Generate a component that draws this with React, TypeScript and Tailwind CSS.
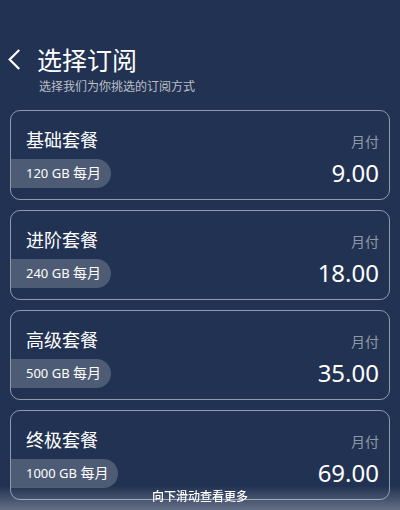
type Plan = { name: string; quota: string; price: string };

const plans: Plan[] = [
  { name: '基础套餐', quota: '120 GB', price: '9.00' },
  { name: '进阶套餐', quota: '240 GB', price: '18.00' },
  { name: '高级套餐', quota: '500 GB', price: '35.00' },
  { name: '终极套餐', quota: '1000 GB', price: '69.00' },
];

function PlanCard({ plan }: { plan: Plan }) {
  return (
    <button
      type="button"
      className="flex w-full items-start justify-between rounded-[10px] border border-[#909aab] pt-4 pr-2.5 pb-1.5 text-left"
    >
      <span className="flex flex-col items-start gap-1.5">
        <span className="pl-[15px] text-lg leading-[26px]">{plan.name}</span>
        <span className="rounded-r-full bg-white/20 pr-2.5 pl-[15px] text-[13px] leading-[29px]">
          {plan.quota} <span className="text-sm">每月</span>
        </span>
      </span>
      <span className="flex flex-col items-end pt-1">
        <span className="text-sm leading-[22px] text-white/50">月付</span>
        <span className="text-2xl leading-10">{plan.price}</span>
      </span>
    </button>
  );
}

export default function App() {
  return (
    <main className="min-h-screen bg-[#223252] px-2.5 pt-11 pb-2.5 font-['Noto_Sans','Noto_Sans_CJK_SC',sans-serif] text-white">
      <header className="flex items-start">
        <button type="button" aria-label="返回" className="-ml-1 flex h-8 w-[31px] items-center">
          <svg width="16" height="22" viewBox="0 0 16 22" fill="none" stroke="currentColor" strokeWidth="2.2">
            <path d="M13.2 1 3.7 10.5 13.2 20" />
          </svg>
        </button>
        <div className="pb-3">
          <h1 className="text-[25px] leading-8">选择订阅</h1>
          <p className="pl-0.5 text-xs leading-[22px] text-white/70">选择我们为你挑选的订阅方式</p>
        </div>
      </header>
      <section className="flex flex-col gap-2.5">
        {plans.map((plan) => (
          <PlanCard key={plan.name} plan={plan} />
        ))}
      </section>
      <div className="pointer-events-none fixed inset-x-0 bottom-0 bg-linear-to-b from-transparent to-white/30 pb-0.5 text-center text-xs leading-[22px] font-medium">
        向下滑动查看更多
      </div>
    </main>
  );
}
